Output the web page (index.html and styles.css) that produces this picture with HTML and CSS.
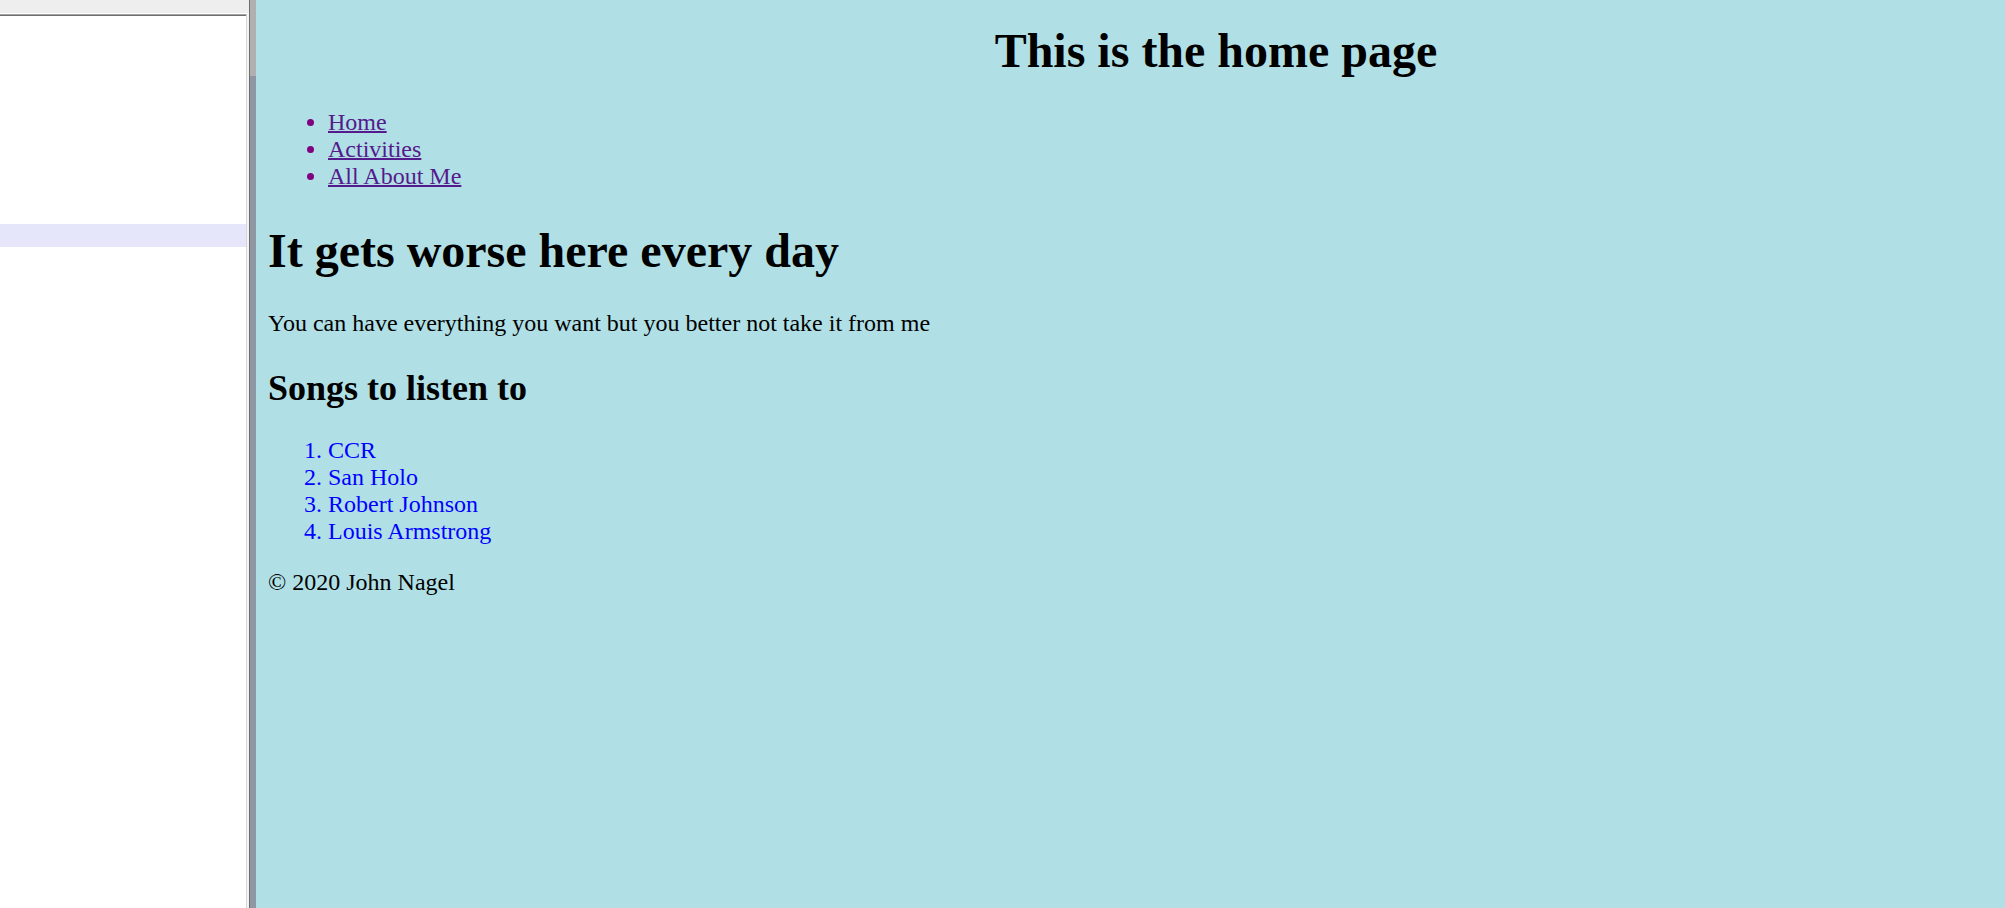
FILE: index.html
```html
<!DOCTYPE html>
<html lang="en">
<head>
<meta charset="utf-8">
<title>Home</title>
<link rel="stylesheet" href="styles.css">
</head>
<body>
<div class="app">
  <aside class="sidebar">
    <div class="sidebar-top"></div>
    <div class="sidebar-list">
      <div class="row selected"></div>
    </div>
  </aside>
  <div class="splitter"><div class="splitter-top"></div></div>
  <main class="page">
    <h1 class="title">This is the home page</h1>
    <ul class="nav">
      <li><a href="#">Home</a></li>
      <li><a href="#">Activities</a></li>
      <li><a href="#">All About Me</a></li>
    </ul>
    <h1 class="headline">It gets worse here every day</h1>
    <p class="lead">You can have everything you want but you better not take it from me</p>
    <h2 class="sub">Songs to listen to</h2>
    <ol class="songs">
      <li>CCR</li>
      <li>San Holo</li>
      <li>Robert Johnson</li>
      <li>Louis Armstrong</li>
    </ol>
    <p class="footer">&copy; 2020 John Nagel</p>
  </main>
</div>
</body>
</html>
```
FILE: styles.css
```css
html, body {
  margin: 0;
  padding: 0;
  height: 100%;
}

.app {
  display: flex;
  height: 100vh;
  overflow: hidden;
}

.sidebar {
  width: 249px;
  flex: none;
  display: flex;
  flex-direction: column;
  background: #f3f3f3;
  border-right: 1px solid #6d6d6d;
}

.sidebar-top {
  height: 13px;
  background: #eeeeee;
  border-bottom: 1px solid #ffffff;
}

.sidebar-list {
  flex: 1;
  background: #ffffff;
  margin-right: 2px;
  border-top: 1px solid #a3a3a3;
  border-right: 1px solid #d6d6d6;
  box-shadow: inset 0 1px 0 #6e6e6e;
  padding-top: 209px;
}

.row {
  height: 23px;
}

.row.selected {
  background: #e6e6fa;
}

.splitter {
  width: 6px;
  flex: none;
  background: #8e97a2;
}

.splitter-top {
  height: 76px;
  background: #b0b0b0;
}

.page {
  flex: 1;
  min-width: 0;
  background: #b0e0e6;
  padding: 0 12px;
  font-family: "Liberation Serif", "Times New Roman", serif;
  font-size: 24px;
  line-height: 27px;
  color: #000000;
}

.title {
  font-size: 48px;
  line-height: 55px;
  font-weight: bold;
  text-align: center;
  padding-left: 171px;
  margin: 23px 0 31px;
}

.nav {
  margin: 0 0 33px;
  padding-left: 60px;
  color: #800080;
}

.nav a {
  color: #551a8b;
  text-decoration: underline;
  text-decoration-thickness: 2px;
}

.headline {
  font-size: 48px;
  line-height: 55px;
  font-weight: bold;
  margin: 0 0 32px;
}

.lead {
  margin: 0 0 31px;
}

.sub {
  font-size: 36px;
  line-height: 41px;
  font-weight: bold;
  margin: 0 0 28px;
}

.songs {
  margin: 0 0 24px;
  padding-left: 60px;
  color: #0000ff;
}

.footer {
  margin: 0;
}
```
